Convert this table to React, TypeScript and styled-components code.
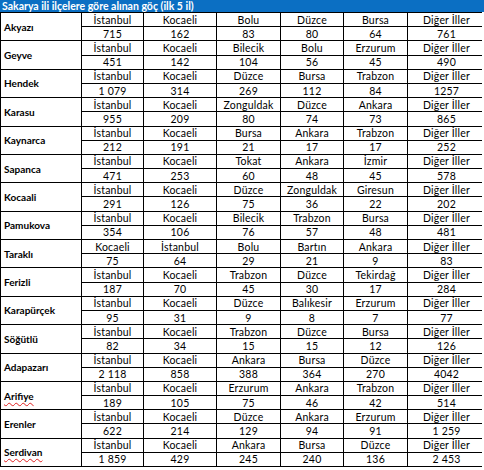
import React from "react";
import styled, { createGlobalStyle } from "styled-components";

const Global = createGlobalStyle`
  html, body { margin: 0; padding: 0; background: #ffffff; }
  body { font-family: Lato, "Liberation Sans", Arial, sans-serif; }
`;

const Page = styled.div`
  width: 484px;
  height: 470px;
  display: flex;
  flex-direction: column;
  background: #fff;
`;

const TitleBar = styled.div`
  flex: 0 0 12px;
  height: 12px;
  background: #0b6fc3;
  color: #fff;
  font-weight: 700;
  font-size: 10.5px;
  line-height: 12px;
  padding-left: 2px;
  white-space: nowrap;
  overflow: hidden;
`;

const Grid = styled.div`
  flex: 0 0 455px;
  height: 455px;
  width: 482px;
  box-sizing: border-box;
  display: grid;
  grid-template-columns: 80px 61px 72px 63px 62px 63px 77px;
  grid-template-rows: repeat(32, 1fr);
  gap: 1px;
  padding: 1px;
  background: #000;
`;

const Label = styled.div<{ $wavy?: boolean }>`
  grid-row: span 2;
  background: #fff;
  display: flex;
  align-items: center;
  padding-left: 3px;
  font-weight: 700;
  font-size: 10px;
  color: #000;
  white-space: nowrap;
  min-height: 0;
  text-decoration: ${(p) => (p.$wavy ? "underline wavy #e02020" : "none")};
  text-decoration-thickness: 1px;
  text-underline-offset: 2px;
`;

const Cell = styled.div`
  background: #fff;
  display: flex;
  align-items: center;
  justify-content: center;
  font-size: 10.5px;
  letter-spacing: 0.2px;
  color: #000;
  white-space: nowrap;
  line-height: 12px;
  min-height: 0;
  overflow: hidden;
`;

type Row = { name: string; wavy?: boolean; cities: string[]; values: string[] };

const rows: Row[] = [
  { name: "Akyazı", cities: ["İstanbul", "Kocaeli", "Bolu", "Düzce", "Bursa", "Diğer İller"], values: ["715", "162", "83", "80", "64", "761"] },
  { name: "Geyve", cities: ["İstanbul", "Kocaeli", "Bilecik", "Bolu", "Erzurum", "Diğer İller"], values: ["451", "142", "104", "56", "45", "490"] },
  { name: "Hendek", cities: ["İstanbul", "Kocaeli", "Düzce", "Bursa", "Trabzon", "Diğer İller"], values: ["1 079", "314", "269", "112", "84", "1257"] },
  { name: "Karasu", cities: ["İstanbul", "Kocaeli", "Zonguldak", "Düzce", "Ankara", "Diğer İller"], values: ["955", "209", "80", "74", "73", "865"] },
  { name: "Kaynarca", cities: ["İstanbul", "Kocaeli", "Bursa", "Ankara", "Trabzon", "Diğer İller"], values: ["212", "191", "21", "17", "17", "252"] },
  { name: "Sapanca", cities: ["İstanbul", "Kocaeli", "Tokat", "Ankara", "İzmir", "Diğer İller"], values: ["471", "253", "60", "48", "45", "578"] },
  { name: "Kocaali", cities: ["İstanbul", "Kocaeli", "Düzce", "Zonguldak", "Giresun", "Diğer İller"], values: ["291", "126", "75", "36", "22", "202"] },
  { name: "Pamukova", cities: ["İstanbul", "Kocaeli", "Bilecik", "Trabzon", "Bursa", "Diğer İller"], values: ["354", "106", "76", "57", "48", "481"] },
  { name: "Taraklı", cities: ["Kocaeli", "İstanbul", "Bolu", "Bartın", "Ankara", "Diğer İller"], values: ["75", "64", "29", "21", "9", "83"] },
  { name: "Ferizli", cities: ["İstanbul", "Kocaeli", "Trabzon", "Düzce", "Tekirdağ", "Diğer İller"], values: ["187", "70", "45", "30", "17", "284"] },
  { name: "Karapürçek", cities: ["İstanbul", "Kocaeli", "Düzce", "Balıkesir", "Erzurum", "Diğer İller"], values: ["95", "31", "9", "8", "7", "77"] },
  { name: "Söğütlü", cities: ["İstanbul", "Kocaeli", "Trabzon", "Düzce", "Bursa", "Diğer İller"], values: ["82", "34", "15", "15", "12", "126"] },
  { name: "Adapazarı", cities: ["İstanbul", "Kocaeli", "Ankara", "Bursa", "Düzce", "Diğer İller"], values: ["2 118", "858", "388", "364", "270", "4042"] },
  { name: "Arifiye", wavy: true, cities: ["İstanbul", "Kocaeli", "Erzurum", "Ankara", "Trabzon", "Diğer İller"], values: ["189", "105", "75", "46", "42", "514"] },
  { name: "Erenler", cities: ["İstanbul", "Kocaeli", "Düzce", "Ankara", "Erzurum", "Diğer İller"], values: ["622", "214", "129", "94", "91", "1 259"] },
  { name: "Serdivan", wavy: true, cities: ["İstanbul", "Kocaeli", "Ankara", "Bursa", "Düzce", "Diğer İller"], values: ["1 859", "429", "245", "240", "136", "2 453"] },
];

export default function App() {
  return (
    <Page>
      <Global />
      <TitleBar>Sakarya ili ilçelere göre alınan göç (ilk 5 il)</TitleBar>
      <Grid>
        {rows.map((r) => (
          <React.Fragment key={r.name}>
            <Label $wavy={r.wavy}>{r.name}</Label>
            {r.cities.map((c, i) => (
              <Cell key={"c" + i}>{c}</Cell>
            ))}
            {r.values.map((v, i) => (
              <Cell key={"v" + i}>{v}</Cell>
            ))}
          </React.Fragment>
        ))}
      </Grid>
    </Page>
  );
}
